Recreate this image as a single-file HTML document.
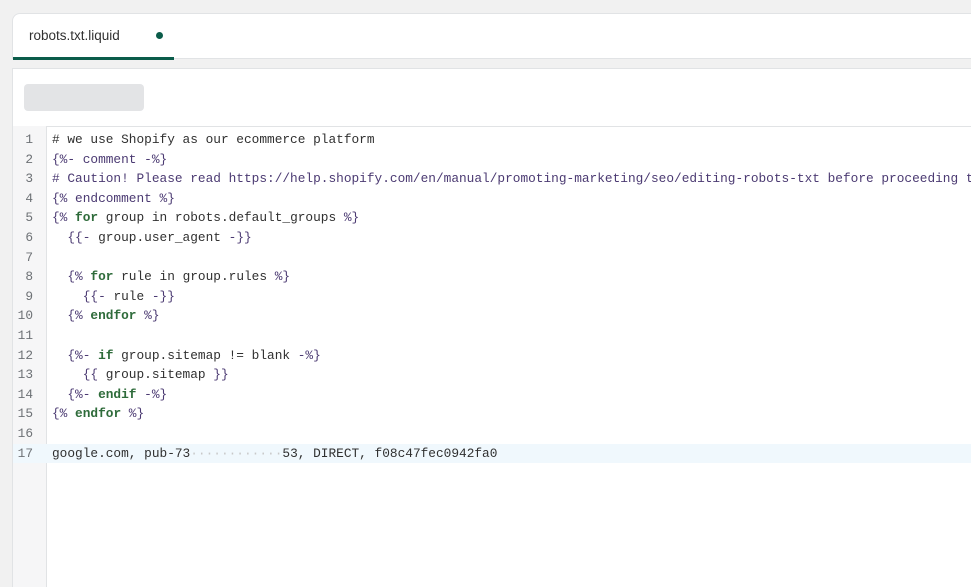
<!DOCTYPE html>
<html><head><style>
body{margin:0;width:971px;height:587px;background:#f1f1f1;overflow:hidden;font-family:"Liberation Sans",sans-serif;position:relative}
.tabs{position:absolute;left:12px;top:13px;width:959px;height:46px;background:#fff;border:1px solid #e1e3e5;border-right:none;border-radius:8px 0 0 0;box-sizing:border-box}
.tab{position:absolute;left:0;top:0;width:161px;height:46px;border-bottom:3px solid #0b5c4a;box-sizing:border-box}
.tab span{position:absolute;left:16px;top:14px;font-size:13.5px;color:#303030}
.dot{position:absolute;left:143px;top:18px;width:7px;height:7px;border-radius:50%;background:#0b5c4a}
.card{position:absolute;left:12px;top:68px;width:959px;height:519px;background:#fff;border:1px solid #e1e3e5;border-right:none;border-bottom:none;box-sizing:border-box;overflow:hidden}
.tb{height:57px;border-bottom:1px solid #e1e3e5}
.sk{position:absolute;left:11px;top:15px;width:120px;height:27px;background:#e3e4e6;border-radius:4px}
.gut{position:absolute;left:0;top:57px;width:33px;bottom:0;background:#f6f6f7;border-right:1px solid #e1e3e5}
.code{position:absolute;left:0;top:61px;right:0;font-family:"Liberation Mono",monospace;font-size:12.8px;line-height:19.6px;color:#303030}
.l{position:relative;height:19.6px;white-space:pre}
.n{position:absolute;left:0;width:20px;text-align:right;color:#6d7175}
.t{position:absolute;left:39px}
.hl{background:#f0f8fd}
.p{color:#4b3a72}.k{color:#2e6b3a;font-weight:bold}
</style></head><body>
<div class="tabs"><div class="tab"><span>robots.txt.liquid</span><div class="dot"></div></div></div>
<div class="card"><div class="tb"><div class="sk"></div></div><div class="gut"></div>
<div class="code">
<div class="l"><span class="n">1</span><span class="t"># we use Shopify as our ecommerce platform</span></div>
<div class="l"><span class="n">2</span><span class="t p">{%- comment -%}</span></div>
<div class="l"><span class="n">3</span><span class="t p"># Caution! Please read https://help.shopify.com/en/manual/promoting-marketing/seo/editing-robots-txt before proceeding to</span></div>
<div class="l"><span class="n">4</span><span class="t p">{% endcomment %}</span></div>
<div class="l"><span class="n">5</span><span class="t"><span class="p">{% </span><span class="k">for</span> group in robots.default_groups <span class="p">%}</span></span></div>
<div class="l"><span class="n">6</span><span class="t">  <span class="p">{{-</span> group.user_agent <span class="p">-}}</span></span></div>
<div class="l"><span class="n">7</span><span class="t"></span></div>
<div class="l"><span class="n">8</span><span class="t">  <span class="p">{% </span><span class="k">for</span> rule in group.rules <span class="p">%}</span></span></div>
<div class="l"><span class="n">9</span><span class="t">    <span class="p">{{-</span> rule <span class="p">-}}</span></span></div>
<div class="l"><span class="n">10</span><span class="t">  <span class="p">{% </span><span class="k">endfor</span><span class="p"> %}</span></span></div>
<div class="l"><span class="n">11</span><span class="t"></span></div>
<div class="l"><span class="n">12</span><span class="t">  <span class="p">{%- </span><span class="k">if</span> group.sitemap != blank <span class="p">-%}</span></span></div>
<div class="l"><span class="n">13</span><span class="t">    <span class="p">{{</span> group.sitemap <span class="p">}}</span></span></div>
<div class="l"><span class="n">14</span><span class="t">  <span class="p">{%- </span><span class="k">endif</span><span class="p"> -%}</span></span></div>
<div class="l"><span class="n">15</span><span class="t"><span class="p">{% </span><span class="k">endfor</span><span class="p"> %}</span></span></div>
<div class="l"><span class="n">16</span><span class="t"></span></div>
<div class="l hl"><span class="n">17</span><span class="t">google.com, pub-73<span style="color:#c8c8c8">············</span>53, DIRECT, f08c47fec0942fa0</span></div>
</div></div>
</body></html>
